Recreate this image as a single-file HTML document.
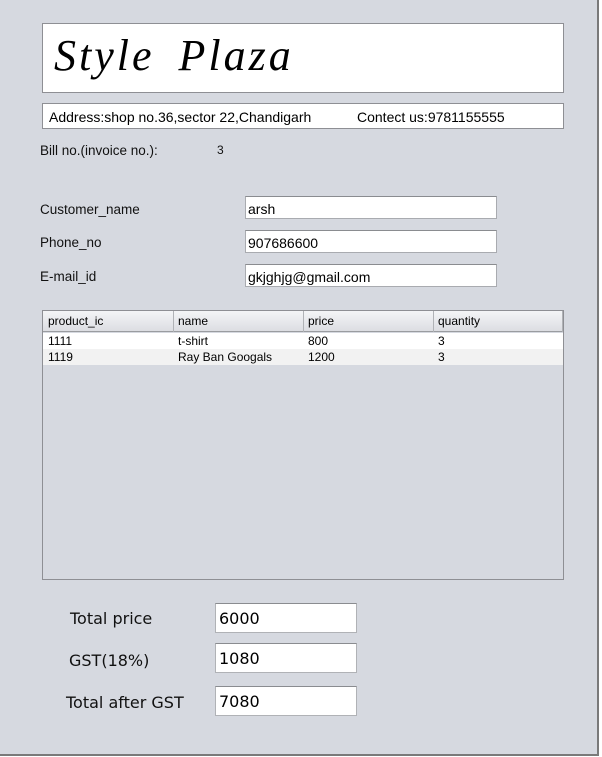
<!DOCTYPE html>
<html><head><style>
*{margin:0;padding:0;box-sizing:border-box}
body{width:602px;height:757px;background:#fff;position:relative;overflow:hidden;font-family:"Liberation Sans",sans-serif;}
#p{position:absolute;left:0;top:0;width:599px;height:756px;background:#d6d9e0;border-right:2px solid #7a7a7a;border-bottom:2px solid #7a7a7a;}
.a{position:absolute}
.box{position:absolute;background:#fff;border:1px solid #8e8f94}
.tf{position:absolute;background:#fff;border:1px solid #a9abb0;border-top-color:#8a8c90;font-size:14px;padding-left:2px;line-height:24px}
.l{position:absolute;font-size:13.5px;color:#111}
.t{position:absolute;font-family:"DejaVu Sans",sans-serif;font-size:16px;color:#111}
.bt{position:absolute;background:#fff;border:1px solid #b0b2b6;border-top-color:#8a8c90;font-family:"DejaVu Sans",sans-serif;font-size:16px;padding-left:3px;line-height:29px}
</style></head><body><div id="p">
<div class="box" style="left:42px;top:23px;width:522px;height:70px"></div>
<div class="a" style="left:54px;top:30px;font-family:'Liberation Serif',serif;font-style:italic;font-size:44px;letter-spacing:3px;word-spacing:10px">Style Plaza</div>
<div class="box" style="left:42px;top:103px;width:522px;height:26px;font-size:14px;padding:5px 0 0 6px">Address:shop no.36,sector 22,Chandigarh<span style="position:absolute;left:314px;top:5px">Contect us:9781155555</span></div>
<div class="l" style="left:40px;top:143px">Bill no.(invoice no.):</div>
<div class="l" style="left:217px;top:143px;font-size:12px">3</div>
<div class="l" style="left:40px;top:202px">Customer_name</div>
<div class="l" style="left:40px;top:235px">Phone_no</div>
<div class="l" style="left:40px;top:269px">E-mail_id</div>
<div class="tf" style="left:245px;top:196px;width:252px;height:23px">arsh</div>
<div class="tf" style="left:245px;top:230px;width:252px;height:23px">907686600</div>
<div class="tf" style="left:245px;top:264px;width:252px;height:23px">gkjghjg@gmail.com</div>
<div class="a" style="left:42px;top:310px;width:522px;height:270px;border:1px solid #8e8f94;background:#d6d9e0">
<div class="a" style="left:0;top:0;width:520px;height:21px;background:linear-gradient(#f4f5f7,#dcdde2);border-bottom:1px solid #9a9ca0;font-size:12px;line-height:21px">
<span class="a" style="left:5px">product_ic</span><span class="a" style="left:135px">name</span><span class="a" style="left:265px">price</span><span class="a" style="left:395px">quantity</span>
<div class="a" style="left:130px;top:0;width:1px;height:21px;background:#b0b2b6"></div>
<div class="a" style="left:260px;top:0;width:1px;height:21px;background:#b0b2b6"></div>
<div class="a" style="left:390px;top:0;width:1px;height:21px;background:#b0b2b6"></div>
<div class="a" style="left:519px;top:0;width:1px;height:21px;background:#b0b2b6"></div>
</div>
<div class="a" style="left:0;top:22px;width:520px;height:16px;background:#fff;font-size:12px;line-height:16px"><span class="a" style="left:5px">1111</span><span class="a" style="left:135px">t-shirt</span><span class="a" style="left:265px">800</span><span class="a" style="left:395px">3</span></div>
<div class="a" style="left:0;top:38px;width:520px;height:16px;background:#f2f2f2;font-size:12px;line-height:16px"><span class="a" style="left:5px">1119</span><span class="a" style="left:135px">Ray Ban Googals</span><span class="a" style="left:265px">1200</span><span class="a" style="left:395px">3</span></div>
</div>
<div class="t" style="left:70px;top:609px">Total price</div>
<div class="t" style="left:69px;top:651px">GST(18%)</div>
<div class="t" style="left:66px;top:693px">Total after GST</div>
<div class="bt" style="left:215px;top:603px;width:142px;height:30px">6000</div>
<div class="bt" style="left:215px;top:643px;width:142px;height:30px">1080</div>
<div class="bt" style="left:215px;top:686px;width:142px;height:30px">7080</div>
</div></body></html>
